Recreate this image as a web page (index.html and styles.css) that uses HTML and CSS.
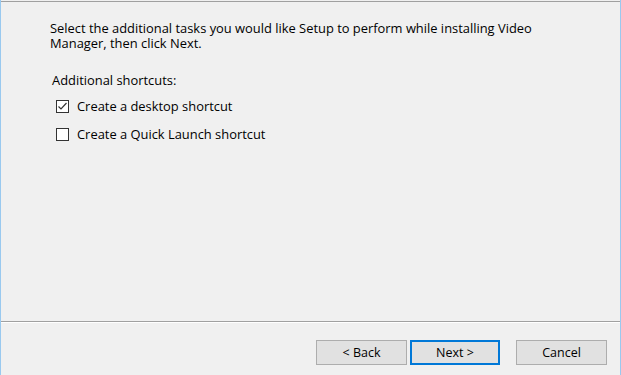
FILE: index.html
```html
<!DOCTYPE html>
<html lang="en">
<head>
    <meta charset="UTF-8">
    <title>Setup - Video Manager</title>
    <link rel="stylesheet" href="styles.css">
</head>
<body>
    <div class="wizard">
        <div class="wizard-page">
            <p class="intro">Select the additional tasks you would like Setup to perform while installing Video Manager, then click Next.</p>

            <div class="group-label">Additional shortcuts:</div>

            <label class="check-row">
                <span class="checkbox checked">
                    <svg width="11" height="11" viewBox="0 0 11 11"><path d="M1.5 5.5 L4 8 L9.5 2" fill="none" stroke="#333" stroke-width="1.2"/></svg>
                </span>
                Create a desktop shortcut
            </label>
            <label class="check-row">
                <span class="checkbox"></span>
                Create a Quick Launch shortcut
            </label>
        </div>

        <div class="wizard-footer">
            <button class="btn">&lt; Back</button>
            <button class="btn btn-default">Next &gt;</button>
            <button class="btn btn-cancel">Cancel</button>
        </div>
    </div>
</body>
</html>
```

FILE: styles.css
```css
html, body {
    margin: 0;
    height: 100%;
}

body {
    font-family: 'Open Sans', 'Noto Sans', sans-serif;
    font-size: 12.9px;
    color: #000;
    background-color: #f0f0f0;
}

.wizard {
    height: 375px;
    box-sizing: border-box;
    border-left: 1px solid #99c9ef;
    border-right: 1px solid #99c9ef;
    display: flex;
    flex-direction: column;
}

.wizard-page {
    flex: 1;
    margin-top: 1px;
    border-top: 1px solid #a0a0a0;
    padding: 19px 0 0 49px;
}

.intro {
    margin: 0;
    width: 500px;
    line-height: 15px;
}

.group-label {
    margin-top: 22px;
    margin-left: 2px;
    line-height: 15px;
}

.check-row {
    display: flex;
    align-items: center;
    gap: 8px;
    margin-left: 6px;
    height: 28px;
}

.check-row:first-of-type {
    margin-top: 4px;
}

.checkbox {
    width: 13px;
    height: 13px;
    box-sizing: border-box;
    border: 1px solid #333;
    background-color: #fff;
    display: flex;
    align-items: center;
    justify-content: center;
}

.wizard-footer {
    height: 54px;
    box-sizing: border-box;
    border-top: 1px solid #a0a0a0;
    box-shadow: inset 0 1px 0 #fff;
    display: flex;
    justify-content: flex-end;
    align-items: flex-start;
    padding: 18px 13px 0 0;
}

.btn {
    width: 91px;
    height: 25px;
    font-family: inherit;
    font-size: 12.5px;
    color: #000;
    background-color: #e1e1e1;
    border: 1px solid #adadad;
    margin-left: 3px;
    padding: 0;
}

.btn-default {
    width: 90px;
    border: 2px solid #0078d7;
}

.btn-cancel {
    margin-left: 16px;
}
```
